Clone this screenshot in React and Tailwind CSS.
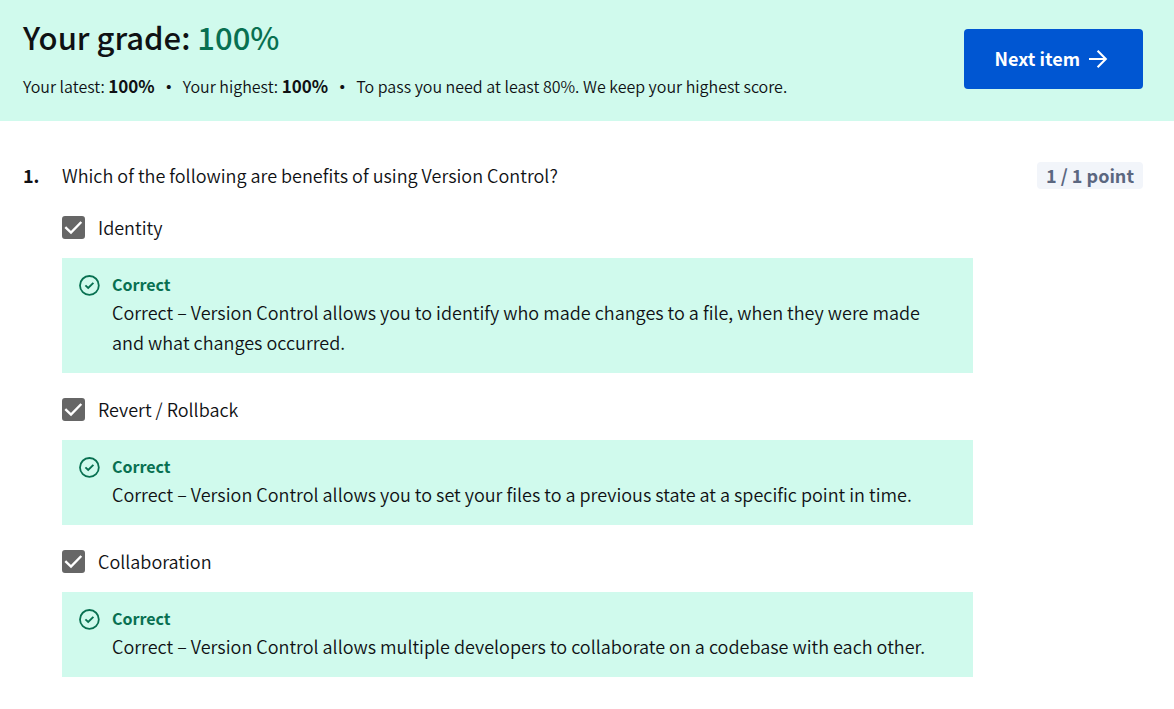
import React from 'react';

const answers = [
  {
    id: 'identity',
    label: 'Identity',
    feedback:
      'Correct – Version Control allows you to identify who made changes to a file, when they were made and what changes occurred.',
  },
  {
    id: 'revert',
    label: 'Revert / Rollback',
    feedback:
      'Correct – Version Control allows you to set your files to a previous state at a specific point in time.',
  },
  {
    id: 'collaboration',
    label: 'Collaboration',
    feedback:
      'Correct – Version Control allows multiple developers to collaborate on a codebase with each other.',
  },
];

function ArrowIcon() {
  return (
    <svg className="size-5" viewBox="0 0 20 20" fill="none" stroke="currentColor" strokeWidth="2.1" aria-hidden="true">
      <path d="M1 11H17.6M9.6 2.8L17.8 11L9.6 19.2" />
    </svg>
  );
}

function CorrectIcon() {
  return (
    <svg className="mt-0.5 size-[22px] shrink-0" viewBox="0 0 22 22" fill="none" stroke="currentColor" aria-hidden="true">
      <circle cx="11.4" cy="11.4" r="9.4" strokeWidth="1.8" />
      <path d="M7.4 11.4L10.2 14L15.4 8.8" strokeWidth="1.9" />
    </svg>
  );
}

function Answer({ id, label, feedback }) {
  return (
    <li>
      <div className="mb-4 flex items-center gap-[13px]">
        <span className="grid size-[23px] shrink-0">
          <input
            id={id}
            type="checkbox"
            defaultChecked
            className="peer col-start-1 row-start-1 size-[23px] appearance-none rounded-[3px] border-2 border-[#666666] checked:bg-[#666666]"
          />
          <svg
            className="pointer-events-none col-start-1 row-start-1 hidden size-[23px] peer-checked:block"
            viewBox="0 0 23 23"
            fill="none"
            stroke="white"
            strokeWidth="2.4"
            aria-hidden="true"
          >
            <path d="M3.3 11.2L9 16.6L19.3 6" />
          </svg>
        </span>
        <label htmlFor={id} className="text-[18px] leading-[30px]">
          {label}
        </label>
      </div>
      <div className="flex gap-3 bg-[#d0faed] pt-3.5 pr-8 pb-4 pl-4 text-[#087051]">
        <CorrectIcon />
        <div>
          <p className="text-[16px] leading-[25px] font-bold">Correct</p>
          <p className="text-[18px] leading-[30px] text-[#0f1114]">{feedback}</p>
        </div>
      </div>
    </li>
  );
}

export default function App() {
  return (
    <div className="min-h-screen bg-white font-['Noto_Sans_CJK_SC',sans-serif] font-[350] text-[#0f1114]">
      <header className="flex items-start justify-between gap-6 bg-[#d0faed] pt-4 pr-[31px] pb-[23px] pl-[23px]">
        <div>
          <h1 className="text-[31px] leading-[42px] font-medium">
            Your grade: <span className="text-[#087051]">100%</span>
          </h1>
          <p className="mt-4 text-[16px] leading-6">
            Your latest: <strong className="text-[17px] font-bold">100%</strong>
            <span className="mx-1.5 font-bold">•</span>
            Your highest: <strong className="text-[17px] font-bold">100%</strong>
            <span className="mx-1.5 font-bold">•</span>
            To pass you need at least 80%. We keep your highest score.
          </p>
        </div>
        <button
          type="button"
          className="mt-[13px] flex h-[60px] shrink-0 items-center gap-2 rounded-[4px] bg-[#0056d2] pr-[35px] pb-0.5 pl-[31px] text-[18px] font-bold text-white"
        >
          Next item
          <ArrowIcon />
        </button>
      </header>
      <main className="flex pt-[39px] pr-[31px] pb-8 pl-[23px]">
        <span className="w-[39px] shrink-0 text-[18px] leading-[30px] font-bold">1.</span>
        <section className="flex-1">
          <div className="flex items-center justify-between gap-4">
            <h2 className="text-[18px] leading-[30px]">
              Which of the following are benefits of using Version Control?
            </h2>
            <span className="shrink-0 rounded-[4px] bg-[#f2f5fa] px-[9px] text-[18px] leading-[27px] font-bold text-[#5b6780]">
              1 / 1 point
            </span>
          </div>
          <ul className="mt-[22px] mr-[170px] flex flex-col gap-[21px]">
            {answers.map((answer) => (
              <Answer key={answer.id} {...answer} />
            ))}
          </ul>
        </section>
      </main>
    </div>
  );
}
